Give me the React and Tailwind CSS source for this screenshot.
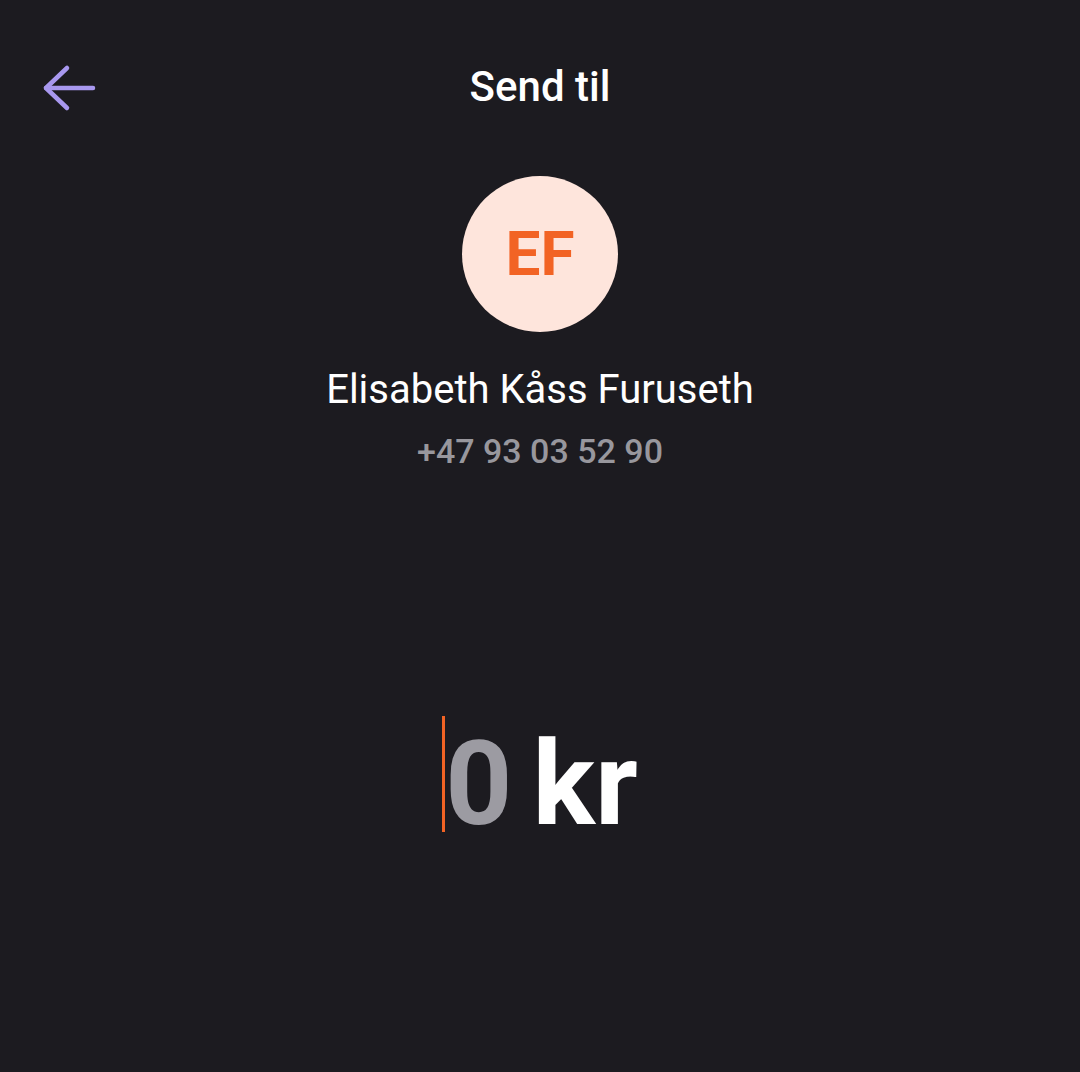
export default function App() {
  return (
    <div
      className="w-[1080px] h-[1072px] bg-[#1c1b20] text-white flex flex-col items-center overflow-hidden"
      style={{ fontFamily: "Roboto, 'Noto Sans', sans-serif" }}
    >
      {/* header */}
      <div className="relative w-full h-[176px] flex justify-center pt-[59px]">
        <button className="absolute left-[40px] top-[62px]">
          <svg width="60" height="52" viewBox="0 0 60 52" fill="none" stroke="#a898ef" strokeWidth="4.5" strokeLinecap="round" strokeLinejoin="round">
            <path d="M6 26 H53" />
            <path d="M27 6 L6 26 L27 46" />
          </svg>
        </button>
        <h1 className="text-[42px] leading-[56px] font-medium">Send til</h1>
      </div>

      {/* recipient */}
      <div className="w-[156px] h-[156px] rounded-full bg-[#fee5dc] flex items-center justify-center">
        <span className="text-[62px] font-bold text-[#f26324] leading-none">EF</span>
      </div>
      <p className="mt-[34px] text-[40px] leading-[48px] text-white">Elisabeth Kåss Furuseth</p>
      <p className="mt-[15px] text-[34px] leading-[44px] font-medium text-[#98979d]">+47 93 03 52 90</p>

      {/* amount */}
      <div className="mt-[221px] flex items-center">
        <span className="w-[3px] h-[116px] bg-[#f26324]" />
        <span className="pt-[20px] text-[117px] font-bold leading-[140px] text-[#9c9ba2]">0</span>
        <span className="pt-[20px] text-[117px] font-bold leading-[140px] text-white ml-[20px]">kr</span>
      </div>
    </div>
  );
}
